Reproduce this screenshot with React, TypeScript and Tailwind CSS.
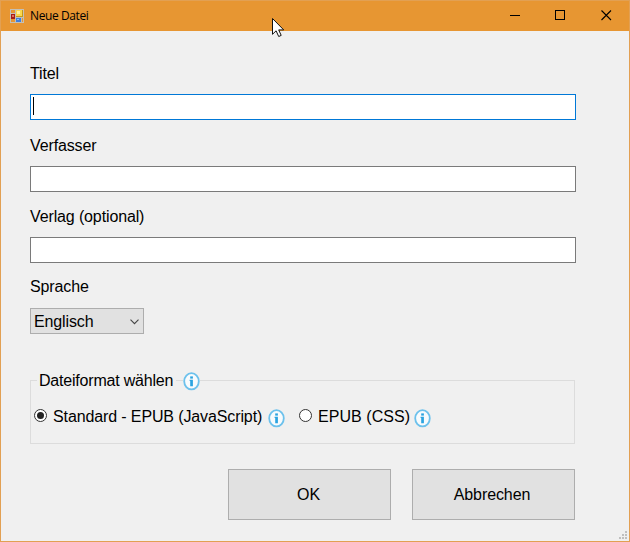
import type { ReactNode } from "react";

function InfoIcon() {
  return (
    <svg width="17" height="19" viewBox="0 0 17 19" className="shrink-0">
      <ellipse cx="8.5" cy="9.3" rx="7.3" ry="8.1" fill="#f8fbfd" stroke="#6cc1ec" strokeWidth="1.8" />
      <rect x="7.2" y="4.4" width="2.7" height="2.2" fill="#2ba3e0" />
      <path d="M6.6 7.8h3.3v6.4H7.2V9h-.6z" fill="#2ba3e0" />
    </svg>
  );
}

function AppIcon() {
  return (
    <svg width="14" height="14" viewBox="0 0 14 14" shapeRendering="crispEdges">
      <rect width="14" height="14" fill="#c3c0b8" />
      <rect x="1" y="1" width="4" height="3" fill="#e79632" />
      <rect x="1" y="10" width="4" height="3" fill="#e79632" />
      <rect x="1" y="5" width="4" height="5" fill="#a81d18" />
      <rect x="2" y="6" width="2" height="2" fill="#e0705c" />
      <rect x="6" y="1" width="7" height="7" fill="#c79a16" />
      <rect x="6" y="1" width="6" height="6" fill="#fbd84d" />
      <rect x="7" y="2" width="3" height="3" fill="#fff0a0" />
      <rect x="6" y="9" width="5" height="4" fill="#3f7fdc" />
      <rect x="7" y="10" width="2" height="1" fill="#8ec0fa" />
      <rect x="12" y="9" width="1" height="4" fill="#e79632" />
    </svg>
  );
}

function Field({ label, className, children }: { label: string; className: string; children: ReactNode }) {
  return (
    <label className={`flex flex-col ${className}`}>
      <span className="h-[18px] leading-[18px] tracking-[-0.13px]">{label}</span>
      {children}
    </label>
  );
}

function Radio({ checked }: { checked?: boolean }) {
  return (
    <span className="mb-[5px] flex size-[13px] shrink-0 items-center justify-center rounded-full border border-[#333] bg-white">
      {checked && <span className="size-[7px] rounded-full bg-[#222]" />}
    </span>
  );
}

export default function App() {
  return (
    <div className="relative flex h-[542px] w-[630px] flex-col overflow-hidden border border-[#e2a053] bg-[#f0f0f0] font-['Liberation_Sans',Arial,sans-serif] text-[16px] text-black">
      <header className="flex h-[30px] shrink-0 items-center bg-[#e79632] pl-[9px]">
        <AppIcon />
        <span className="ml-1.5 flex-1 font-['Open_Sans','Noto_Sans',sans-serif] text-[12px] leading-[16px] tracking-[-0.4px]">Neue Datei</span>
        <svg width="130" height="30" viewBox="0 0 130 30" fill="none" stroke="#000" className="mr-0.5">
          <path d="M13 14.5h10M58.5 9.5h9v9h-9z" shapeRendering="crispEdges" />
          <path d="M104.5 9.5l9.5 9.5M114 9.5l-9.5 9.5" strokeWidth="1.1" />
        </svg>
      </header>

      <main className="flex flex-col pl-[29px]">
        <Field label="Titel" className="mt-[34px] gap-[11px]">
          <span className="flex h-[26px] w-[546px] border border-[#0078d7] bg-white pt-[2px] pl-[2px]">
            <span className="h-[18px] w-px bg-black" />
          </span>
        </Field>
        <Field label="Verfasser" className="mt-[17px] gap-[11px]">
          <span className="h-[26px] w-[546px] border border-[#7a7a7a] bg-white" />
        </Field>
        <Field label="Verlag (optional)" className="mt-[16px] gap-[11px]">
          <span className="h-[26px] w-[546px] border border-[#7a7a7a] bg-white" />
        </Field>
        <Field label="Sprache" className="mt-[15px] gap-[12px]">
          <span className="flex h-[26px] w-[114px] items-center justify-between border border-[#adadad] bg-[#e1e1e1] pt-[2px] pr-1 pl-[3px]">
            <span className="tracking-[-0.13px]">Englisch</span>
            <svg width="9" height="6" viewBox="0 0 9 6" fill="none" stroke="#444" strokeWidth="1.1">
              <path d="M.5 .7l4 4 4-4" />
            </svg>
          </span>
        </Field>

        <section className="mt-[46px] h-[64px] w-[545px] border border-[#dcdcdc]">
          <div className="-mt-[9px] ml-[6px] flex h-[19px] w-max items-center">
            <span className="mb-[2px] bg-[#f0f0f0] pr-[3px] pl-[2px] leading-[18px] tracking-[-0.2px]">Dateiformat wählen</span>
            <span className="ml-[7px] bg-[#f0f0f0]"><InfoIcon /></span>
          </div>
          <div className="mt-[17px] ml-[3px] flex h-[20px] items-center">
            <Radio checked />
            <span className="mb-[2px] ml-[6px] w-[215px] whitespace-nowrap tracking-[-0.12px]">Standard - EPUB (JavaScript)</span>
            <InfoIcon />
            <span className="ml-[14px]"><Radio /></span>
            <span className="mb-[2px] ml-[6px] w-[96px] whitespace-nowrap tracking-[0.05px]">EPUB (CSS)</span>
            <InfoIcon />
          </div>
        </section>

        <div className="mt-[25px] ml-[198px] flex gap-[21px] tracking-[-0.1px]">
          <button className="h-[51px] w-[163px] border border-[#adadad] bg-[#e1e1e1] pr-[2px]">OK</button>
          <button className="h-[51px] w-[163px] border border-[#adadad] bg-[#e1e1e1] pr-[3px]">Abbrechen</button>
        </div>
      </main>

      <svg className="absolute right-[2px] bottom-[2px]" width="8" height="8" viewBox="0 0 8 8" fill="#bfbfbf" shapeRendering="crispEdges">
        <path d="M6 0h2v2H6zM3 3h2v2H3zM6 3h2v2H6zM0 6h2v2H0zM3 6h2v2H3zM6 6h2v2H6z" />
      </svg>
      <svg className="absolute top-[17px] left-[271px]" width="13" height="20" viewBox="0 0 13 20">
        <path d="M.5 .5v15.8l3.6-3.5 2.6 5.7 2.5-1.1-2.5-5.5h5z" fill="#fff" stroke="#111" strokeWidth="1" />
      </svg>
    </div>
  );
}
